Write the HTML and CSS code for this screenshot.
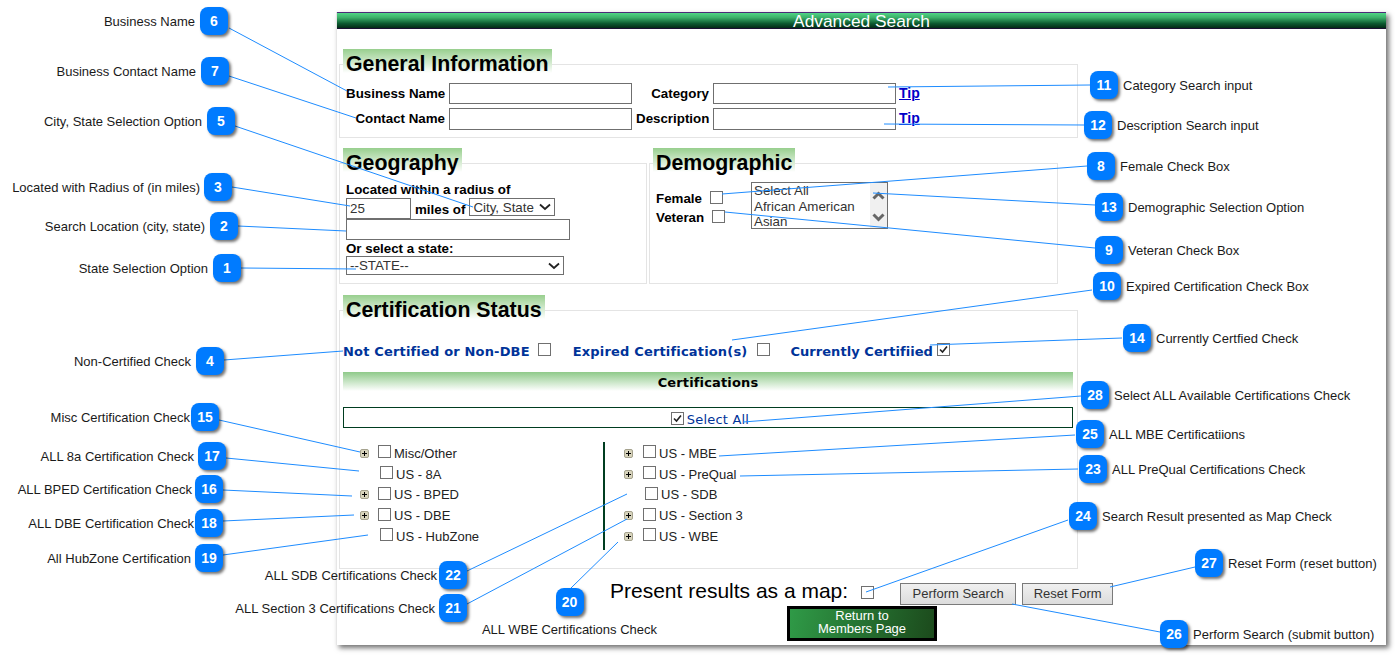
FILE: index.html
```html
<!DOCTYPE html>
<html lang="en">
<head>
<meta charset="utf-8">
<title>Advanced Search</title>
<link rel="stylesheet" href="styles.css">
</head>
<body>
<svg width="0" height="0" class="defs">
  <symbol id="plus" viewBox="0 0 9 9">
    <rect x=".5" y=".5" width="8" height="8" rx="1.5" fill="#d8d4bc" stroke="#a5a28e"/>
    <path d="M2 4.500h5M4.500 2v5" stroke="#000" fill="none"/>
  </symbol>
</svg>
<div class="stage">
  <div class="shot">
    <div class="titlebar">Advanced Search</div>

    <section class="sec sec-general">
      <h2 class="legend">General Information</h2>
      <div class="general-grid">
        <label class="lbl">Business Name</label><input class="txt" type="text">
        <label class="lbl">Category</label><input class="txt" type="text"><a class="tip">Tip</a>
        <label class="lbl">Contact Name</label><input class="txt" type="text">
        <label class="lbl">Description</label><input class="txt" type="text"><a class="tip">Tip</a>
      </div>
    </section>

    <div class="pair">
      <section class="sec sec-geo">
        <h2 class="legend">Geography</h2>
        <div class="geo-title">Located within a radius of</div>
        <div class="geo-row">
          <input class="txt txt-radius" type="text" value="25">
          <span class="lbl">miles of</span>
          <select class="sel sel-city"><option>City, State</option></select>
        </div>
        <input class="txt txt-loc" type="text">
        <div class="geo-state">Or select a state:</div>
        <select class="sel sel-state"><option>--STATE--</option></select>
      </section>
      <section class="sec sec-demo">
        <h2 class="legend">Demographic</h2>
        <div class="demo-body">
          <div class="demo-checks">
            <div class="demo-line"><span class="lbl">Female</span><input class="cb cb-demo" type="checkbox"></div>
            <div class="demo-line"><span class="lbl">Veteran</span><input class="cb cb-demo" type="checkbox"></div>
          </div>
          <div class="listbox">
            <div class="list-items"><div>Select All</div><div>African American</div><div>Asian</div></div>
            <div class="list-scroll">
              <svg width="13" height="9" viewBox="0 0 13 9"><path d="M1.500 7.500 6.500 2.500l5 5" fill="none" stroke="#666" stroke-width="3"/></svg>
              <svg width="13" height="9" viewBox="0 0 13 9"><path d="M1.500 1.500 6.500 6.500l5-5" fill="none" stroke="#666" stroke-width="3"/></svg>
            </div>
          </div>
        </div>
      </section>
    </div>

    <section class="sec sec-cert">
      <h2 class="legend">Certification Status</h2>
      <div class="status-row">
        <span class="status">Not Certified or Non-DBE</span><input class="cb" type="checkbox">
        <span class="status status-2">Expired Certification(s)</span><input class="cb" type="checkbox">
        <span class="status status-3">Currently Certifiied</span><input class="cb" type="checkbox" checked>
      </div>
      <div class="cert-bar">Certifications</div>
      <div class="select-all"><input class="cb" type="checkbox" checked><span>Select All</span></div>
      <div class="tree">
        <div class="tree-col tree-left">
          <div class="node"><svg class="exp"><use href="#plus"/></svg><input class="cb" type="checkbox"><span>Misc/Other</span></div>
          <div class="node leaf"><input class="cb" type="checkbox"><span>US - 8A</span></div>
          <div class="node"><svg class="exp"><use href="#plus"/></svg><input class="cb" type="checkbox"><span>US - BPED</span></div>
          <div class="node"><svg class="exp"><use href="#plus"/></svg><input class="cb" type="checkbox"><span>US - DBE</span></div>
          <div class="node leaf"><input class="cb" type="checkbox"><span>US - HubZone</span></div>
        </div>
        <div class="tree-col tree-right">
          <div class="node"><svg class="exp"><use href="#plus"/></svg><input class="cb" type="checkbox"><span>US - MBE</span></div>
          <div class="node"><svg class="exp"><use href="#plus"/></svg><input class="cb" type="checkbox"><span>US - PreQual</span></div>
          <div class="node leaf"><input class="cb" type="checkbox"><span>US - SDB</span></div>
          <div class="node"><svg class="exp"><use href="#plus"/></svg><input class="cb" type="checkbox"><span>US - Section 3</span></div>
          <div class="node"><svg class="exp"><use href="#plus"/></svg><input class="cb" type="checkbox"><span>US - WBE</span></div>
        </div>
      </div>
    </section>

    <div class="actions">
      <span class="map-label">Present results as a map:</span><input class="cb cb-map" type="checkbox">
      <button class="btn btn-search" type="button">Perform Search</button>
      <button class="btn btn-reset" type="button">Reset Form</button>
    </div>
    <button class="return" type="button">Return to<br>Members Page</button>
  </div>

  <svg class="leaders" width="1395" height="659" viewBox="0 0 1395 659">
    <path d="M229 28 347 91M229 76 356 118M235 126 473 207M232 187 350 206M238 226 346 231M241 268 356 269M224 360 343 351M219 420 360 452M226 458 359 471M223 490 352 496M223 521 354 515M223 555 368 535M467 571 627 494M467 604 627 519M571 588 618 542M1090 85 888 87M1084 125 884 124M1087 166 722 194M1095 205 873 193M1095 248 725 212M1092 290 732 340M1122 338 930 345M1081 396 743 422M1075 435 719 456M1078 469 740 476M1068 520 866 592M1195 567 1110 587M1160 632 1012 604"/>
  </svg>

  <div class="pin l p6"><span class="cap">Business Name</span><b class="badge">6</b></div>
  <div class="pin l p7"><span class="cap">Business Contact Name</span><b class="badge">7</b></div>
  <div class="pin l p5"><span class="cap">City, State Selection Option</span><b class="badge">5</b></div>
  <div class="pin l p3"><span class="cap">Located with Radius of (in miles)</span><b class="badge">3</b></div>
  <div class="pin l p2"><span class="cap">Search Location (city, state)</span><b class="badge">2</b></div>
  <div class="pin l p1"><span class="cap">State Selection Option</span><b class="badge">1</b></div>
  <div class="pin l p4"><span class="cap">Non-Certified Check</span><b class="badge">4</b></div>
  <div class="pin l p15"><span class="cap">Misc Certification Check</span><b class="badge">15</b></div>
  <div class="pin l p17"><span class="cap">ALL 8a Certification Check</span><b class="badge">17</b></div>
  <div class="pin l p16"><span class="cap">ALL BPED Certification Check</span><b class="badge">16</b></div>
  <div class="pin l p18"><span class="cap">ALL DBE Certification Check</span><b class="badge">18</b></div>
  <div class="pin l p19"><span class="cap">All HubZone Certification</span><b class="badge">19</b></div>
  <div class="pin l p22"><span class="cap">ALL SDB Certifications Check</span><b class="badge">22</b></div>
  <div class="pin l p21"><span class="cap">ALL Section 3 Certifications Check</span><b class="badge">21</b></div>
  <div class="pin col p20"><b class="badge">20</b><span class="cap">ALL WBE Certifications Check</span></div>
  <div class="pin p11"><b class="badge">11</b><span class="cap">Category Search input</span></div>
  <div class="pin p12"><b class="badge">12</b><span class="cap">Description Search input</span></div>
  <div class="pin p8"><b class="badge">8</b><span class="cap">Female Check Box</span></div>
  <div class="pin p13"><b class="badge">13</b><span class="cap">Demographic Selection Option</span></div>
  <div class="pin p9"><b class="badge">9</b><span class="cap">Veteran Check Box</span></div>
  <div class="pin p10"><b class="badge">10</b><span class="cap">Expired Certification Check Box</span></div>
  <div class="pin p14"><b class="badge">14</b><span class="cap">Currently Certfied Check</span></div>
  <div class="pin p28"><b class="badge">28</b><span class="cap">Select ALL Available Certifications Check</span></div>
  <div class="pin p25"><b class="badge">25</b><span class="cap">ALL MBE Certificatiions</span></div>
  <div class="pin p23"><b class="badge">23</b><span class="cap">ALL PreQual Certifications Check</span></div>
  <div class="pin p24"><b class="badge">24</b><span class="cap">Search Result presented as Map Check</span></div>
  <div class="pin p27"><b class="badge">27</b><span class="cap">Reset Form (reset button)</span></div>
  <div class="pin p26"><b class="badge">26</b><span class="cap">Perform Search (submit button)</span></div>
</div>
</body>
</html>
```
FILE: styles.css
```css
* { box-sizing: border-box; }
html, body { margin: 0; padding: 0; background: #fff; }
body { font-family: "Liberation Sans", Arial, sans-serif; color: #000; }
.defs { position: absolute; }
.stage { position: relative; width: 1395px; height: 659px; overflow: hidden; background: #fff; }

/* screenshot window */
.shot {
  width: 1050px; height: 633px; margin: 12px 0 0 336px;
  background: #fff; border-left: 1px solid #e6e6e6;
  box-shadow: 3px 3px 5px rgba(0, 0, 0, .55);
}
.titlebar {
  height: 17px; line-height: 17px; font-size: 17.330px; color: #fff; text-align: center;
  border-top: 1px solid #4b2a78; border-bottom: 1px solid #1a0f30;
  background: linear-gradient(#50d585 0%, #3cb06a 30%, #0c5a30 70%, #032b16 100%);
}
.sec { border: 1px solid #e4e4e4; background: #fff; }
.legend {
  width: max-content; height: 24px; margin: -16px 0 0 3px; padding: 4px 3px 0 3px;
  font-size: 21.330px; line-height: 22px; font-weight: bold;
  background: linear-gradient(#98cf8e, #fff);
}
.lbl { font-size: 13.330px; font-weight: bold; }
.txt {
  display: block; margin: 0; padding: 0 3px; height: 22px; background: #fff; color: #333;
  border: 1px solid #6f6f6f; border-radius: 0; font: 13.330px "Liberation Sans", Arial, sans-serif;
}
.sel {
  display: block; margin: 0; padding: 0 3px; background: #fff; color: #333;
  border: 1px solid #6f6f6f; border-radius: 0; font: 13.330px "Liberation Sans", Arial, sans-serif;
  appearance: none; -webkit-appearance: none;
  background-image: url("data:image/svg+xml,%3Csvg xmlns='http://www.w3.org/2000/svg' width='12' height='8'%3E%3Cpath d='M1 1.500 6 6l5-4.500' fill='none' stroke='%23222' stroke-width='1.800'/%3E%3C/svg%3E");
  background-repeat: no-repeat; background-position: right 3px center;
}
.cb {
  appearance: none; -webkit-appearance: none; display: block; flex: none; margin: 0;
  width: 13px; height: 13px; background: #fff; border: 1px solid #707070; border-radius: 0;
}
.cb:checked {
  background-image: url("data:image/svg+xml,%3Csvg xmlns='http://www.w3.org/2000/svg' width='11' height='11'%3E%3Cpath d='M2 5.500 4.500 8 9 2.500' fill='none' stroke='%23222' stroke-width='1.600'/%3E%3C/svg%3E");
  background-repeat: no-repeat; background-position: center;
}

/* general */
.sec-general { width: 739px; height: 74px; margin: 35px 0 0 2px; }
.general-grid {
  display: grid; grid-template-columns: 99px 183px 73px 183px auto; grid-template-rows: 21px 22px;
  column-gap: 4px; row-gap: 4px; align-items: center;
  margin: 10px 0 0 6px; width: max-content;
}
.general-grid .lbl { text-align: right; white-space: nowrap; margin-top: -1px; }
.general-grid .txt { height: 100%; width: 183px; }
.tip { font-size: 14px; font-weight: bold; color: #0000c8; text-decoration: underline; margin: -2px 0 0 -1px; }

/* geo + demo */
.pair { display: flex; gap: 2px; margin: 25px 0 0 2px; }
.sec-geo { width: 308px; height: 121px; padding-left: 6px; }
.sec-geo .legend { margin-left: -3px; }
.geo-title { font-size: 13.330px; font-weight: bold; line-height: 16px; margin-top: 10px; }
.geo-row { display: flex; align-items: flex-start; height: 21px; }
.geo-row .lbl { margin: 4px 4px 0 4px; white-space: nowrap; }
.txt-radius { width: 65px; height: 21px; }
.sel-city { width: 86px; height: 18px; }
.txt-loc { width: 224px; height: 21px; }
.geo-state { height: 16px; padding-top: 1px; font-size: 13.330px; font-weight: bold; line-height: 16px; }
.sel-state { width: 218px; height: 19px; }
.sec-demo { width: 409px; height: 121px; }
.demo-body { display: flex; margin: 10px 0 0 6px; }
.demo-checks { width: 95px; padding-top: 7px; }
.demo-line { display: flex; align-items: center; gap: 8px; height: 19px; }
.cb-demo { margin-top: -3px; }
.listbox { display: flex; width: 137px; height: 47px; border: 1px solid #6f6f6f; overflow: hidden; background: #fff; }
.list-items { flex: 1; font-size: 13.330px; line-height: 15.500px; color: #333; padding-left: 2px; white-space: nowrap; }
.list-scroll { width: 17px; background: #f0f0f0; display: flex; flex-direction: column; justify-content: space-between; align-items: center; padding: 8px 0 6px; }

/* certification */
.sec-cert { width: 739px; height: 259px; margin: 26px 0 0 2px; padding-left: 3px; }
.sec-cert .legend { margin-left: 0; }
.status-row { display: flex; align-items: center; height: 18px; margin-top: 23px; }
.status { font: bold 13px "DejaVu Sans", Verdana, sans-serif; letter-spacing: .17px; color: #003399; white-space: nowrap; margin-right: 8px; }
.status-row .cb { margin-top: -3px; }
.status-2 { margin-left: 22px; margin-right: 10px; }
.status-3 { margin-left: 20px; margin-right: 4px; letter-spacing: .05px; }
.cert-bar {
  width: 730px; height: 19px; margin-top: 12px; text-align: center;
  font: bold 13px/22px "DejaVu Sans", Verdana, sans-serif; letter-spacing: .15px;
  background: linear-gradient(#8fca8a, #fff);
}
.select-all {
  width: 730px; height: 21px; margin-top: 16px; padding: 3px 0 0 4px; border: 1px solid #003d20;
  display: flex; align-items: center; justify-content: center; gap: 3px;
  font: 13px "DejaVu Sans", Verdana, sans-serif; letter-spacing: .2px; color: #003399;
}
.select-all .cb { margin-top: -2px; }
.tree { display: flex; margin-top: 14px; height: 108px; }
.tree-col { display: grid; grid-auto-rows: 20.750px; padding-top: 1px; font-size: 13px; color: #222; }
.tree-left { width: 260px; padding-left: 17px; }
.tree-right { border-left: 2px solid #003d20; padding-left: 19px; }
.node { display: flex; align-items: center; white-space: nowrap; }
.exp { width: 9px; height: 9px; margin-right: 10px; flex: none; }
.tree-left .exp { margin-right: 9px; }
.node .cb { margin-right: 3px; margin-top: -3px; }
.leaf { padding-left: 21px; }
.tree-left .leaf { padding-left: 20px; }

/* actions */
.actions { display: flex; align-items: center; height: 22px; margin: 14px 0 0 273px; }
.map-label { font-size: 21px; white-space: nowrap; margin-top: -6px; }
.cb-map { margin-left: 13px; margin-top: -4px; }
.btn {
  height: 22px; padding: 0 0 2px; font: 13px "Liberation Sans", Arial, sans-serif; color: #333;
  border: 1px solid #7a7a7a; border-radius: 0; background: linear-gradient(#f0f0f0, #dcdcdc);
}
.btn-search { width: 116px; margin-left: 26px; }
.btn-reset { width: 91px; margin-left: 6px; }
.return {
  display: block; width: 150px; height: 35px; margin: 1px 0 0 450px; padding: 0 0 3px;
  border: 3px solid #000; color: #fff; font: 13px/13px "Liberation Sans", Arial, sans-serif;
  background: linear-gradient(100deg, #2f9a47, #1c4a1c);
}

/* leaders */
.leaders { position: absolute; left: 0; top: 0; pointer-events: none; }
.leaders path { fill: none; stroke: #1e8cff; stroke-width: 1; }

/* callouts on the free canvas */
.pin { position: absolute; display: flex; align-items: center; gap: 5px; white-space: nowrap; }
.col { flex-direction: column; gap: 6px; }
.cap { font-size: 13px; color: #1a1a1a; }
.badge {
  flex: none; width: 28px; height: 28px; border-radius: 8px; background: #007bff; color: #fff;
  font: bold 14px/28px "Liberation Sans", Arial, sans-serif; text-align: center;
  box-shadow: 2px 2px 3px rgba(0, 0, 0, .55);
}
.p6 { right: 1167px; top: 7px; }
.p7 { right: 1166px; top: 57px; }
.p5 { right: 1160px; top: 107px; }
.p3 { right: 1163px; top: 173px; gap: 4px; }
.p2 { right: 1157px; top: 212px; }
.p1 { right: 1154px; top: 254px; }
.p4 { right: 1171px; top: 347px; }
.p15 { right: 1176px; top: 403px; gap: 1px; }
.p17 { right: 1169px; top: 442px; gap: 4px; }
.p16 { right: 1172px; top: 475px; gap: 3px; }
.p18 { right: 1172px; top: 509px; gap: 1px; }
.p19 { right: 1172px; top: 544px; gap: 4px; }
.p22 { right: 928px; top: 561px; gap: 2px; }
.p21 { right: 928px; top: 594px; gap: 4px; }
.p20 { left: 480px; top: 588px; width: 179px; }
.p11 { left: 1090px; top: 71px; }
.p12 { left: 1084px; top: 111px; }
.p8 { left: 1087px; top: 152px; }
.p13 { left: 1095px; top: 193px; }
.p9 { left: 1095px; top: 236px; }
.p10 { left: 1093px; top: 272px; }
.p14 { left: 1123px; top: 324px; }
.p28 { left: 1081px; top: 381px; }
.p25 { left: 1076px; top: 420px; }
.p23 { left: 1079px; top: 455px; }
.p24 { left: 1069px; top: 502px; }
.p27 { left: 1195px; top: 549px; }
.p26 { left: 1160px; top: 620px; }
```
